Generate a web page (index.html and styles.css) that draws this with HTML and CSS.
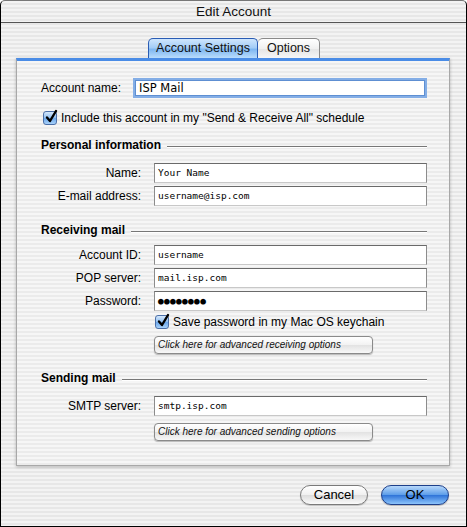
FILE: index.html
```html
<!DOCTYPE html>
<html>
<head>
<meta charset="utf-8">
<link rel="stylesheet" href="styles.css">
</head>
<body>
<div class="window">
  <div class="titlebar">Edit Account</div>
  <div class="body">
    <div class="tabs">
      <div class="tab active">Account Settings</div>
      <div class="tab">Options</div>
    </div>
    <div class="panel">
      <div class="row first">
        <label class="lbl-acc">Account name:</label>
        <div class="field focus">ISP Mail</div>
      </div>
      <div class="check-row top-check">
        <span class="cb"><svg width="14" height="14" viewBox="0 0 14 14"><path d="M3 7.5 L6 11 L12 1" fill="none" stroke="#000" stroke-width="2.4" stroke-linecap="round" stroke-linejoin="round"/></svg></span>
        <span>Include this account in my "Send &amp; Receive All" schedule</span>
      </div>

      <div class="heading h-personal"><span>Personal information</span><i></i></div>
      <div class="grid g-personal">
        <label>Name:</label><div class="field">Your Name</div>
        <label>E-mail address:</label><div class="field">username@isp.com</div>
      </div>

      <div class="heading h-receive"><span>Receiving mail</span><i></i></div>
      <div class="grid g-receive">
        <label>Account ID:</label><div class="field">username</div>
        <label>POP server:</label><div class="field">mail.isp.com</div>
        <label>Password:</label><div class="field pw">&#9679;&#9679;&#9679;&#9679;&#9679;&#9679;&#9679;&#9679;</div>
      </div>
      <div class="check-row sub-check">
        <span class="cb"><svg width="14" height="14" viewBox="0 0 14 14"><path d="M3 7.5 L6 11 L12 1" fill="none" stroke="#000" stroke-width="2.4" stroke-linecap="round" stroke-linejoin="round"/></svg></span>
        <span>Save password in my Mac OS keychain</span>
      </div>
      <div class="adv adv-r">Click here for advanced receiving options</div>

      <div class="heading h-send"><span>Sending mail</span><i></i></div>
      <div class="grid g-send">
        <label>SMTP server:</label><div class="field">smtp.isp.com</div>
      </div>
      <div class="adv adv-s">Click here for advanced sending options</div>
    </div>
    <div class="buttons">
      <div class="btn cancel">Cancel</div>
      <div class="btn ok">OK</div>
    </div>
  </div>
</div>
</body>
</html>
```

FILE: styles.css
```css
html, body { margin: 0; padding: 0; background: #fff; }
body { font-family: "Liberation Sans", "DejaVu Sans", sans-serif; font-size: 12px; color: #000; }

.window {
  width: 467px; height: 527px; box-sizing: border-box;
  border: 1px solid #000; border-top-color: #777;
  border-radius: 5px 5px 0 0;
  overflow: hidden;
  background: repeating-linear-gradient(to bottom, #f3f3f3 0 2px, #e7e7e7 2px 4px);
}
.titlebar {
  height: 21px; line-height: 22px; text-align: center;
  font-size: 13.5px; color: #111;
  border-bottom: 1px solid #555;
}
.body { position: relative; height: 504px; }

.tabs { display: flex; padding-left: 147px; padding-top: 15px; height: 20px; }
.tab {
  box-sizing: border-box; height: 20px; padding: 0 9px;
  line-height: 19px; font-size: 12.5px; color: #111;
  border: 1px solid #8a8a8a; border-bottom: none;
  border-radius: 5px 5px 0 0;
  background: linear-gradient(#ffffff, #f0f0f0 50%, #e4e4e4 51%, #f6f6f6);
}
.tab.active {
  width: 110px; text-align: center; padding: 0;
  border-color: #2a5cb4;
  background: linear-gradient(#cfe6fd, #a4cdf7 45%, #7fb7f1 55%, #b9dcfc);
}
.tab:not(.active) { width: 62px; text-align: center; padding: 0; border-left: none; }

.panel {
  margin-left: 15px; width: 434px; height: 408px; box-sizing: border-box;
  border: 1px solid #a8a8a8; border-top: 3px solid #4a8ce6;
  box-shadow: 0 1px 3px rgba(0,0,0,0.25);
  background: repeating-linear-gradient(to bottom, #f6f6f6 0 2px, #ebebeb 2px 4px);
  padding-top: 17px;
}

.row { display: flex; align-items: center; }
.lbl-acc { width: 92px; padding-left: 24px; }
.field {
  box-sizing: border-box; height: 20px; width: 273px;
  background: #fff;
  border: 1px solid #8c8c8c; border-top-color: #6a6a6a; border-bottom-color: #c8c8c8;
  font-family: "DejaVu Sans Mono", monospace; font-size: 9.5px; line-height: 18px;
  padding-left: 3px;
}
.field.focus {
  width: 294px; border: 2px solid #84aee6; box-shadow: inset 0 0 0 1px #5e8fd2;
  font-family: "DejaVu Sans", sans-serif; font-size: 11.5px; line-height: 16px; padding-left: 4px;
}
.field.pw { font-size: 9.5px; letter-spacing: 0.3px; }

.check-row { display: flex; align-items: center; gap: 4px; height: 16px; }
.top-check { margin: 12px 0 0 26px; }
.sub-check { margin: 3px 0 0 138px; }
.cb {
  width: 14px; height: 14px; box-sizing: border-box; display: block;
  border: 1px solid #4b6fa8; border-radius: 3px;
  background: linear-gradient(#d5e8fc, #8fbef0 50%, #6aa6ea 51%, #a8d2fa);
}
.cb svg { display: block; margin: -2px 0 0 0; overflow: visible; }

.heading { display: flex; align-items: center; margin-left: 24px; width: 386px; height: 14px; font-weight: bold; }
.heading i { flex: 1; height: 1px; background: #777; margin-left: 6px; margin-top: 4px; border-bottom: 1px solid #fff; }
.h-personal { margin-top: 12px; }
.h-receive { margin-top: 17px; }
.h-send { margin-top: 17px; }

.grid { display: grid; grid-template-columns: 124px 273px; column-gap: 13px; row-gap: 3px; align-items: center; }
.grid label { text-align: right; }
.g-personal { margin-top: 11px; }
.g-receive { margin-top: 8px; }
.g-send { margin-top: 11px; }

.adv {
  margin-left: 137px; width: 219px; height: 18px; box-sizing: border-box;
  border: 1px solid #8a8a8a; border-radius: 4px;
  background: linear-gradient(#ffffff, #f2f2f2 50%, #e2e2e2 51%, #f8f8f8);
  box-shadow: 0 1px 1px rgba(0,0,0,0.25);
  font-style: italic; font-size: 10px; line-height: 16px; padding-left: 3px; color: #111;
}
.adv-r { margin-top: 6px; }
.adv-s { margin-top: 7px; }

.buttons { display: flex; justify-content: flex-end; gap: 13px; padding: 19px 17px 0 0; }
.btn {
  width: 68px; height: 20px; box-sizing: border-box; border-radius: 10px;
  text-align: center; line-height: 18px; font-size: 13px;
}
.cancel {
  border: 1px solid #7a7a7a;
  background: linear-gradient(#ffffff, #f0f0f0 50%, #dcdcdc 51%, #fafafa);
  box-shadow: 0 1px 1px rgba(0,0,0,0.2);
}
.ok {
  border: 1px solid #1d3f8a;
  background: linear-gradient(#b7d8fb, #5b9ce8 50%, #2e73d8 51%, #8cc4fb);
  box-shadow: 0 1px 1px rgba(0,0,0,0.25);
}
```
